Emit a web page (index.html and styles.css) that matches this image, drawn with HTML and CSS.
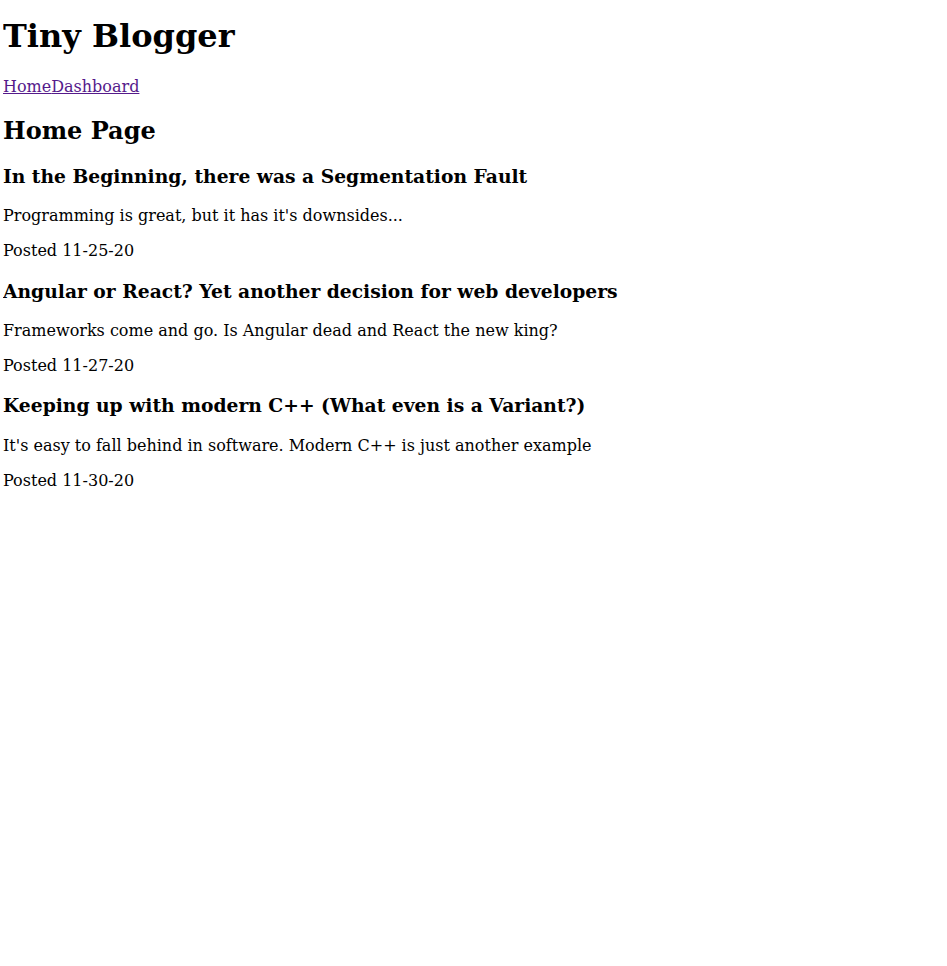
FILE: index.html
```html
<!DOCTYPE html>
<html>
<head>
<meta charset="utf-8">
<link rel="stylesheet" href="styles.css">
</head>
<body class="page">
<h1 class="site-title">Tiny Blogger</h1>
<nav class="nav"><a class="nav-link" href="#">Home</a><a class="nav-link" href="#">Dashboard</a></nav>
<h2 class="page-title">Home Page</h2>
<div class="post">
<h3 class="post-title">In the Beginning, there was a Segmentation Fault</h3>
<p class="post-body">Programming is great, but it has it's downsides...</p>
<p class="post-date">Posted 11-25-20</p>
</div>
<div class="post">
<h3 class="post-title">Angular or React? Yet another decision for web developers</h3>
<p class="post-body">Frameworks come and go. Is Angular dead and React the new king?</p>
<p class="post-date">Posted 11-27-20</p>
</div>
<div class="post">
<h3 class="post-title">Keeping up with modern C++ (What even is a Variant?)</h3>
<p class="post-body">It's easy to fall behind in software. Modern C++ is just another example</p>
<p class="post-date">Posted 11-30-20</p>
</div>
</body>
</html>
```

FILE: styles.css
```css
html, body {
  font-family: "DejaVu Serif", serif;
  background: #fff;
  color: #000;
}
.page {
  margin: 3px;
}
.site-title {
  margin-top: 14.4px;
}
.nav-link {
  color: #551a8b;
}
.post-title {
  margin-bottom: 19.4px;
}
.post + .post .post-title {
  margin-top: 19.5px;
}
```
